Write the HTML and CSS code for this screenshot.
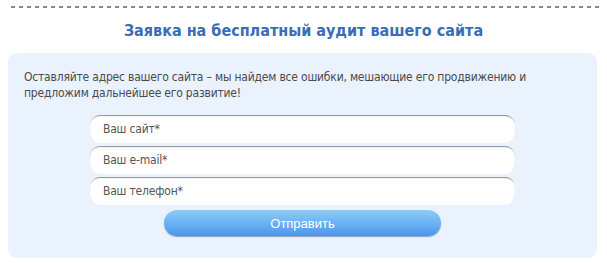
FILE: index.html
```html
<!DOCTYPE html>
<html lang="ru">
<head>
    <meta charset="UTF-8">
    <link rel="stylesheet" href="styles.css">
</head>
<body>
    <div class="divider"></div>

    <h2 class="audit-title">Заявка на бесплатный аудит вашего сайта</h2>

    <div class="audit-box">
        <p class="audit-text">Оставляйте адрес вашего сайта – мы найдем все ошибки, мешающие его продвижению и предложим дальнейшее его развитие!</p>

        <form class="audit-form">
            <input class="audit-input" type="text" placeholder="Ваш сайт*">
            <input class="audit-input" type="text" placeholder="Ваш e-mail*">
            <input class="audit-input" type="text" placeholder="Ваш телефон*">
            <button class="audit-button" type="button">Отправить</button>
        </form>
    </div>
</body>
</html>
```

FILE: styles.css
```css
* {
    margin: 0;
    padding: 0;
    box-sizing: border-box;
}

body {
    font-family: "DejaVu Sans Condensed", "DejaVu Sans", sans-serif;
    background-color: #ffffff;
    color: #444444;
    width: 607px;
    height: 263px;
    overflow: hidden;
}

.divider {
    height: 2px;
    margin: 6px 6px 0 11px;
    background: repeating-linear-gradient(to right, #8a8a8a 0, #8a8a8a 4px, transparent 4px, transparent 8px);
}

.audit-title {
    font-size: 16px;
    font-weight: bold;
    color: #3b6cb7;
    text-align: center;
    margin: 13px 0 12px;
    line-height: 20px;
}

.audit-box {
    margin: 0 10px 0 8px;
    height: 205px;
    background-color: #eaf2fd;
    border-radius: 9px;
    padding: 16px 16px 0;
}

.audit-text {
    font-size: 12px;
    line-height: 16px;
    letter-spacing: -0.2px;
    color: #4a4a4a;
}

.audit-form {
    display: flex;
    flex-direction: column;
    align-items: center;
    gap: 3px;
    margin-top: 14px;
}

.audit-input {
    width: 425px;
    height: 28px;
    border: none;
    border-radius: 10px;
    background-color: #ffffff;
    box-shadow: inset 0 2px 1px -1px #8e8e8e, inset 1px 0 1px -1px #bbbbbb, inset -1px 0 1px -1px #bbbbbb;
    padding: 0 13px;
    font-family: "DejaVu Sans Condensed", "DejaVu Sans", sans-serif;
    font-size: 12px;
    letter-spacing: -0.2px;
    color: #444444;
    outline: none;
}

.audit-input::placeholder {
    color: #555555;
}

.audit-button {
    width: 277px;
    height: 26px;
    margin-top: 2px;
    border: none;
    border-radius: 13px;
    background: linear-gradient(to bottom, #8ecbf7 0%, #6bb2f4 50%, #4b95ea 100%);
    box-shadow: 0 1px 1px rgba(40, 80, 140, 0.5);
    color: #ffffff;
    font-family: "Liberation Sans", Arial, sans-serif;
    font-size: 13px;
    cursor: pointer;
}
```
